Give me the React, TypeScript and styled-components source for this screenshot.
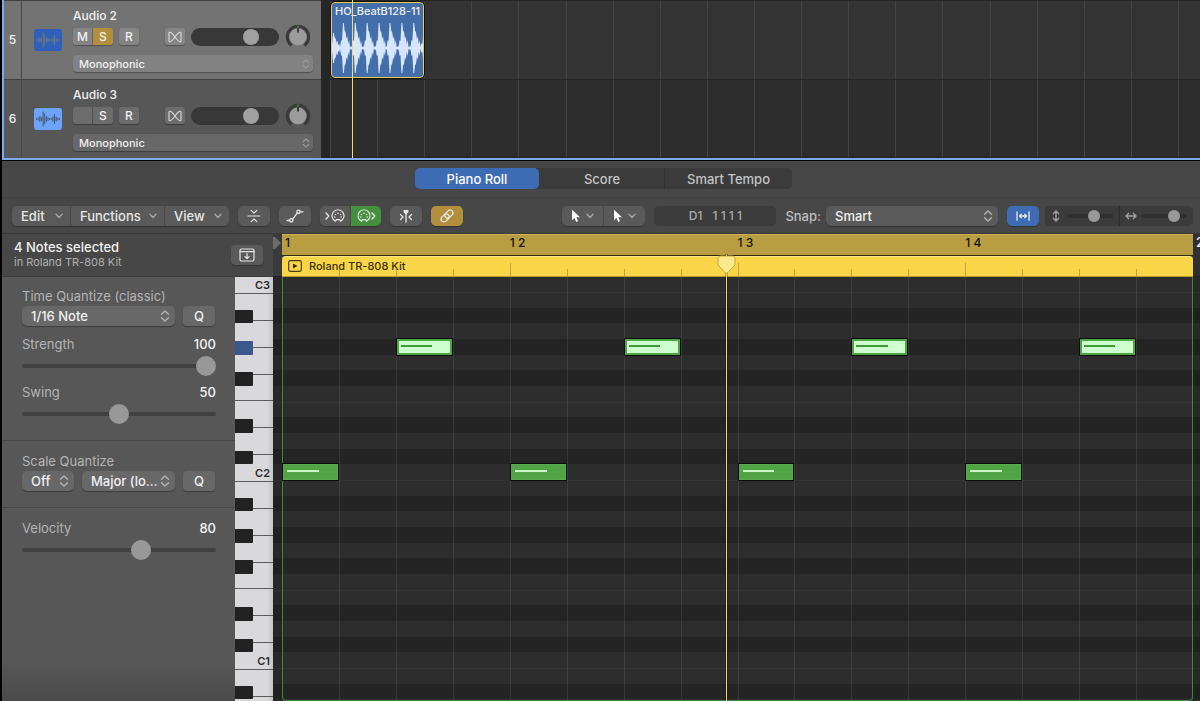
import React from "react";
import styled, { createGlobalStyle, css } from "styled-components";

const Global = createGlobalStyle`
  *, *::before, *::after { box-sizing: border-box; }
  body {
    margin: 0;
    background: #000;
    color: #f0f0f0;
    font: 500 12px/16px Inter, "Liberation Sans", sans-serif;
  }
  button, select, input { font: inherit; color: inherit; margin: 0; border: 0; }
  button { padding: 0; cursor: pointer; }
`;

const Shell = styled.main`
  height: 100vh;
  padding-left: 2px;
  display: flex;
  flex-direction: column;
  overflow: hidden;
`;

/* ---------- arrange area ---------- */

const Arrange = styled.section`
  display: grid;
  grid-template-columns: 319px 1fr;
  border-left: 2px solid #7daaf0;
  border-bottom: 2px solid #7daaf0;
  flex: none;
`;

const TrackList = styled.div`
  border-right: 2px solid #262626;
`;

const Track = styled.div<{ $selected?: boolean }>`
  display: grid;
  grid-template-columns: 18px 51px 1fr;
  border-top: 1px solid #414141;
  background: ${(p) => (p.$selected ? "#737373" : "#575757")};
`;

const TrackNumber = styled.div`
  display: grid;
  place-items: center;
  border-right: 1px solid #484848;
`;

const TrackIcon = styled.div<{ $on?: boolean }>`
  align-self: center;
  justify-self: center;
  width: 28px;
  height: 22px;
  border-radius: 3px;
  background: ${(p) => (p.$on ? "#6ba4fa" : "#2e61b7")};
  color: ${(p) => (p.$on ? "#45536b" : "#6f7783")};
`;

const TrackBody = styled.div`
  padding: 6px 8px 7px 0;
`;

const TrackName = styled.div`
  line-height: 17px;
  padding-bottom: 4px;
`;

const TrackControls = styled.div`
  display: flex;
  align-items: center;
  height: 17px;
  margin-bottom: 10px;
`;

const Toggle = styled.button<{ $gold?: boolean; $join?: "left" | "right" }>`
  width: 20px;
  height: 17px;
  display: grid;
  place-items: center;
  background: ${(p) => (p.$gold ? "#b18f3d" : "rgba(255,255,255,.13)")};
  border-radius: ${(p) =>
    p.$join === "left" ? "3px 0 0 3px" : p.$join === "right" ? "0 3px 3px 0" : "3px"};
  box-shadow: 0 1px 1px rgba(0, 0, 0, .3);
  ${(p) => p.$join === "left" && css`border-right: 1px solid rgba(0, 0, 0, .2);`}
`;

const FlexToggle = styled(Toggle)`
  margin-left: auto;
  margin-right: 6px;
  color: #d4d4d4;
`;

const RecordToggle = styled(Toggle)`
  margin-left: 6px;
`;

const Volume = styled.input`
  appearance: none;
  width: 88px;
  height: 18px;
  padding: 0 1px;
  border-radius: 9px;
  background: #383838;
  &::-webkit-slider-thumb {
    appearance: none;
    width: 16px;
    height: 16px;
    border-radius: 50%;
    background: #a0a0a0;
  }
`;

const KnobBox = styled.span`
  display: block;
  width: 26px;
  height: 26px;
  margin: 0 2px 0 6px;
`;

const SelectBox = styled.span<{ $small?: boolean; $tone?: string; $width?: string }>`
  display: grid;
  grid-template-columns: 1fr auto;
  align-items: center;
  width: ${(p) => p.$width || "auto"};
  height: ${(p) => (p.$small ? 17 : 20)}px;
  font-size: ${(p) => (p.$small ? 11 : 13)}px;
  border-radius: ${(p) => (p.$small ? 4 : 5)}px;
  background: ${(p) => p.$tone || "#686868"};
  box-shadow: 0 1px 1px rgba(0, 0, 0, .3);
  select {
    grid-area: 1 / 1 / 2 / 3;
    appearance: none;
    min-width: 0;
    width: 100%;
    height: 100%;
    padding: 0 14px 0 ${(p) => (p.$small ? 6 : 9)}px;
    background: none;
    outline-offset: 1px;
  }
  select option { background: #444; }
  svg {
    grid-area: 1 / 2;
    margin-right: ${(p) => (p.$small ? 3 : 5)}px;
    pointer-events: none;
    color: ${(p) => (p.$small ? "#9b9b9b" : "#b4b4b4")};
  }
`;

const Lanes = styled.div`
  position: relative;
  display: grid;
  grid-template: 79px 78px / 100%;
  padding-left: 7px;
  background: #262626;
`;

const Lane = styled.div<{ $selected?: boolean }>`
  display: grid;
  grid-template-columns: repeat(18, 1fr) 22px;
  background: ${(p) => (p.$selected ? "#333" : "#2d2d2d")};
  border-top: 1px solid #232323;
`;

const LaneCell = styled.div<{ $col: number }>`
  grid-row: 1;
  grid-column: ${(p) => p.$col};
  border-left: 1px solid #434343;
`;

const Clip = styled.div`
  grid-area: 1 / 1 / 2 / 3;
  z-index: 1;
  margin: 1px 0 1px 1px;
  border: 1px solid #e8cb55;
  border-radius: 4px;
  background: #446ea9;
  outline: 1px solid #111;
  overflow: hidden;
  white-space: nowrap;
  display: flex;
  flex-direction: column;
  font-size: 11px;
  svg { flex: 1; min-height: 0; width: 100%; display: block; }
`;

const ClipName = styled.div`
  padding-left: 3px;
  flex: none;
`;

const ArrangePlayhead = styled.div`
  position: absolute;
  z-index: 2;
  top: 0;
  bottom: 0;
  left: calc(7px + 2.5%);
  width: 1px;
  background: #f3dc78;
`;

/* ---------- editor ---------- */

const Editor = styled.section`
  flex: 1;
  min-height: 0;
  margin-top: 1px;
  display: flex;
  flex-direction: column;
  background: #474747;
  font-size: 13px;
`;

const TabBar = styled.div`
  flex: none;
  display: flex;
  justify-content: center;
  padding: 7px 0 8px 5px;
  border-bottom: 1px solid #414141;
`;

const Tabs = styled.div`
  display: grid;
  grid-template-columns: 124px 126px 127px;
  height: 21px;
  border-radius: 5px;
  background: #3b3b3b;
`;

const Tab = styled.button<{ $active?: boolean; $divided?: boolean }>`
  background: ${(p) => (p.$active ? "#3d6cb5" : "none")};
  color: ${(p) => (p.$active ? "#fff" : "#c3c3c3")};
  font-size: 13px;
  border-radius: 5px;
  ${(p) => p.$divided && css`
    box-shadow: -1px 0 0 #323232;
    border-radius: 0;
  `}
`;

const Toolbar = styled.div`
  flex: none;
  display: flex;
  align-items: center;
  gap: 9px;
  height: 36px;
  padding: 0 7px 0 10px;
  border-bottom: 1px solid #3a3a3a;
`;

const Group = styled.div<{ $push?: boolean }>`
  display: flex;
  gap: 1px;
  height: 20px;
  border-radius: 5px;
  background: #484848;
  overflow: hidden;
  box-shadow: 0 1px 1px rgba(0, 0, 0, .3);
  margin-left: ${(p) => (p.$push ? "auto" : "0")};
`;

const Tool = styled.button<{ $tone?: string; $width?: number }>`
  display: flex;
  align-items: center;
  justify-content: center;
  gap: 5px;
  width: ${(p) => p.$width || 32}px;
  height: 20px;
  background: ${(p) => p.$tone || "#5a5a5a"};
  color: #e6e6e6;
`;

const MenuTool = styled(Tool)`
  justify-content: space-between;
  padding: 0 7px 0 9px;
  svg { color: #a5a5a5; }
`;

const PointerTool = styled(Tool)`
  svg:last-child { color: #a5a5a5; }
`;

const Display = styled.output`
  width: 122px;
  height: 20px;
  border-radius: 5px;
  background: #3b3b3b;
  color: #ababab;
  font-size: 12px;
  display: flex;
  align-items: center;
  justify-content: center;
  gap: 10px;
`;

const SnapLabel = styled.div`
  display: flex;
  align-items: center;
  gap: 5px;
  color: #bdbdbd;
  span { color: #f0f0f0; }
`;

const ZoomGroup = styled.div`
  display: grid;
  grid-template-columns: 74px 74px;
  height: 20px;
  border-radius: 5px;
  background: #3b3b3b;
  margin-left: -3px;
`;

const ZoomCell = styled.label`
  display: flex;
  align-items: center;
  justify-content: space-between;
  padding: 0 6px 0 5px;
  color: #a2a2a2;
  & + & { border-left: 1px solid #2f2f2f; }
`;

const Slider = styled.input<{ $thumb: number }>`
  appearance: none;
  display: block;
  width: 100%;
  height: ${(p) => p.$thumb}px;
  background: none;
  &::-webkit-slider-runnable-track {
    height: 4px;
    border-radius: 2px;
    background: ${(p) => (p.$thumb > 12 ? "#414141" : "#303030")};
  }
  &::-webkit-slider-thumb {
    appearance: none;
    width: ${(p) => p.$thumb}px;
    height: ${(p) => p.$thumb}px;
    margin-top: ${(p) => (4 - p.$thumb) / 2}px;
    border-radius: 50%;
    background: #989898;
  }
`;

const ZoomSlider = styled(Slider)`
  width: 46px;
`;

const Workspace = styled.div`
  flex: 1;
  min-height: 0;
  display: grid;
  grid-template-columns: 271px 9px 1fr 7px;
  grid-template-rows: 43px 1fr;
`;

const Selection = styled.header`
  display: flex;
  align-items: center;
  justify-content: space-between;
  padding: 0 10px 0 12px;
  border-bottom: 1px solid #3b3b3b;
`;

const SelectionText = styled.div`
  line-height: 15px;
  small { display: block; font-size: 11px; font-weight: 400; color: #b0b0b0; }
`;

const CatchButton = styled(Tool)`
  border-radius: 4px;
  box-shadow: 0 1px 1px rgba(0, 0, 0, .3);
`;

const Side = styled.div`
  grid-row: 2;
  grid-column: 1;
  display: grid;
  grid-template-columns: 1fr 38px;
  min-height: 0;
  overflow: hidden;
`;

const Inspector = styled.aside`
  background: linear-gradient(#575757 calc(100% - 40px), #4a4a4a);
  color: #b4b4b4;
`;

const Panel = styled.div`
  padding: 11px 19px 16px 20px;
  & + & { border-top: 1px solid #474747; padding-top: 12px; }
`;

const FieldLine = styled.div`
  display: flex;
  align-items: center;
  gap: 8px;
  color: #f0f0f0;
  margin-top: 2px;
`;

const PanelTitle = styled.div`
  font-weight: 400;
`;

const QButton = styled.button`
  width: 32px;
  height: 20px;
  border-radius: 4px;
  background: #686868;
  box-shadow: 0 1px 1px rgba(0, 0, 0, .3);
`;

const SliderField = styled.label`
  display: grid;
  grid-template-columns: 1fr auto;
  row-gap: 4px;
  font-weight: 400;
  margin-bottom: 8px;
  &:last-child { margin-bottom: 0; }
  b { font-weight: 500; color: #f4f4f4; }
  input { grid-column: 1 / 3; }
`;

const QuantizeSliders = styled.div`
  padding-top: 10px;
`;

const Keyboard = styled.div`
  overflow: hidden;
  background: #1c1c1c;
  color: #2b2b2b;
`;

const KeyOctave = styled.div`
  display: grid;
  height: 188px;
`;

const Whites = styled.div`
  grid-area: 1 / 1;
  display: grid;
  grid-template-rows: repeat(7, 1fr);
`;

const WhiteKey = styled.div`
  background: linear-gradient(90deg, #d9d9db 85%, #c4c4c6);
  border-top: 1px solid #5c5c5c;
  display: flex;
  align-items: flex-end;
  justify-content: flex-end;
  padding-right: 3px;
  font-size: 11px;
  font-weight: 600;
`;

const TopKey = styled(WhiteKey)`
  height: 16px;
  border-top: 0;
`;

const Blacks = styled.div`
  grid-area: 1 / 1;
  display: grid;
  grid-template-rows: repeat(12, 1fr);
  width: 18px;
`;

const BlackKey = styled.div<{ $row: number; $lit?: boolean }>`
  grid-row: ${(p) => p.$row};
  margin: 1px 0;
  border-radius: 0 1px 1px 0;
  background: ${(p) => (p.$lit ? "#3a5889" : "#222")};
`;

const GutterTop = styled.div`
  border-bottom: 1px solid #232323;
  background: #3a3a3a;
  overflow: hidden;
  svg { display: block; margin-top: 3px; }
`;

const Gutter = styled.div<{ $column: number }>`
  grid-row: 2;
  grid-column: ${(p) => p.$column};
  overflow: hidden;
  filter: brightness(.88);
`;

const Timeline = styled.div`
  grid-row: 1 / 3;
  grid-column: 3;
  position: relative;
  display: flex;
  flex-direction: column;
  min-height: 0;
`;

const Ruler = styled.div`
  flex: none;
  height: 22px;
  display: grid;
  grid-template-columns: repeat(4, 1fr);
  background: #b99d43;
  border-top: 1px solid #cdb055;
  border-bottom: 1px solid #33290c;
  color: #151204;
  font-size: 12px;
  line-height: 15px;
`;

const Beat = styled.span<{ $first?: boolean }>`
  padding-left: ${(p) => (p.$first ? 3 : 0)}px;
`;

const RegionBar = styled.div`
  flex: none;
  height: 21px;
  display: grid;
  grid-template-columns: repeat(16, 1fr);
  align-items: end;
  background: #f9d648;
  border-top: 1px solid #fde585;
  border-bottom: 1px solid #b89a2e;
  border-radius: 4px 4px 0 0;
`;

const Tick = styled.i<{ $n: number }>`
  grid-row: 1;
  grid-column: ${(p) => p.$n + 1};
  height: ${(p) => (p.$n % 4 === 0 ? 13 : 7)}px;
  border-left: 1px solid #c2a534;
`;

const RegionTitle = styled.div`
  grid-area: 1 / 1 / 2 / 5;
  align-self: start;
  display: flex;
  align-items: center;
  gap: 7px;
  height: 17px;
  padding-left: 6px;
  font-size: 11px;
  color: #3b310b;
`;

const Canvas = styled.div`
  flex: 1;
  min-height: 0;
  display: grid;
  grid-template-columns: 100%;
  grid-template-rows: 100%;
  overflow: hidden;
`;

const RegionFrame = styled.div`
  grid-area: 1 / 1;
  border: 1px solid #3d8a37;
  border-top: 0;
  border-radius: 0 0 4px 4px;
`;

const Rows = styled.div`
  grid-area: 1 / 1;
  height: 0;
`;

const RowOctave = styled.div`
  display: grid;
  grid-template-rows: repeat(12, 1fr);
  grid-template-columns: repeat(16, 1fr);
  height: 188px;
`;

const Row = styled.div<{ $black?: boolean; $edge?: boolean; $row: number }>`
  grid-column: 1 / 17;
  grid-row: ${(p) => p.$row};
  background: ${(p) => (p.$black ? "#242424" : "#2d2d2d")};
  ${(p) => p.$edge && css`border-top: 1px solid #353535;`}
`;

const TopRow = styled.div`
  height: 15px;
  background: #2d2d2d;
`;

const Columns = styled.div`
  grid-area: 1 / 1;
  display: grid;
  grid-template-columns: repeat(16, 1fr);
  pointer-events: none;
  i { border-left: 1px solid rgba(255, 255, 255, .09); }
  i:first-child { border: 0; }
`;

const Note = styled.div<{ $col: number; $row: number; $selected?: boolean }>`
  grid-column: ${(p) => p.$col};
  grid-row: ${(p) => p.$row};
  z-index: 1;
  margin: 0 1px 0 1px;
  padding: ${(p) => (p.$selected ? "4px 0 0 2px" : "5px 0 0 3px")};
  background: ${(p) => (p.$selected ? "#ceffce" : "#50a446")};
  border: ${(p) => (p.$selected ? 2 : 1)}px solid ${(p) => (p.$selected ? "#4fa546" : "#55aa4b")};
  outline: 1px solid #0c0c0c;
  &::before {
    content: "";
    display: block;
    width: 64%;
    height: 2px;
    background: ${(p) => (p.$selected ? "#439a3a" : "#c9f5c4")};
  }
`;

const Playhead = styled.div`
  position: absolute;
  z-index: 3;
  top: 21px;
  bottom: 0;
  left: 48.7%;
  width: 1px;
  background: #f5dc68;
  outline: 1px solid rgba(0, 0, 0, .25);
  svg { position: absolute; top: 0; left: -9px; }
`;

const EndTop = styled.div`
  grid-row: 1;
  grid-column: 4;
  background: #303030;
  border-bottom: 1px solid #232323;
  overflow: hidden;
  padding-left: 3px;
`;

/* ---------- drawings ---------- */

const stroke = { fill: "none", stroke: "currentColor", strokeLinecap: "round", strokeLinejoin: "round" } as const;

const UpDown = ({ small }: { small?: boolean }) => (
  <svg width={small ? 8 : 10} height={small ? 10 : 12} viewBox="0 0 10 12" {...stroke} strokeWidth="1.4">
    <path d="M1.5 4.2 5 1l3.5 3.2M1.5 7.800 5 11l3.5-3.2" />
  </svg>
);

const Down = () => (
  <svg width="8" height="6" viewBox="0 0 8 6" {...stroke} strokeWidth="1.4">
    <path d="M1 1.3 4 4.500l3-3.2" />
  </svg>
);

const WaveIcon = () => {
  const bars = [1, 2, 5, 3, 14, 10, 5, 3, 1, 1, 5, 9, 4, 2, 1];
  return (
    <svg width="28" height="22" viewBox="0 0 28 22" {...stroke} strokeWidth="1">
      {bars.map((h, i) => (
        <path key={i} d={`M${2.6 + i * 1.63} ${11 - h / 2}v${h}`} />
      ))}
    </svg>
  );
};

const BowTie = () => (
  <svg width="14" height="12" viewBox="0 0 14 12" {...stroke} strokeWidth="1.2">
    <path d="M1 10V2Q1 1 2.200 1.300C6 2.500 8 9.500 11.800 10.700Q13 11 13 10V2Q13 1 11.800 1.300C8 2.500 6 9.500 2.200 10.700Q1 11 1 10z" />
  </svg>
);

const Knob = () => (
  <svg width="26" height="26" viewBox="0 0 26 26">
    <path d="M6.6 21.5A10.7 10.7 0 1 1 19.4 21.5" fill="none" stroke="#3a3a3a" strokeWidth="3" />
    <circle cx="13" cy="13" r="8.5" fill="#9c9c9c" />
    <path d="M13 1.2v3" stroke="#4f9c46" strokeWidth="1.2" />
    <path d="M13 4v4.5" stroke="#161616" strokeWidth="1.4" />
  </svg>
);

const Din = ({ out }: { out?: boolean }) => (
  <svg width="20" height="14" viewBox="0 0 20 14" {...stroke} strokeWidth="1.2">
    <g transform={out ? "translate(-5 0)" : undefined}>
      <path d="M10.5 12.2A6 6 0 1 1 15.5 12.2L14.600 10.6H11.4z" />
      {[[9.8, 8], [10.4, 5.5], [13, 4.3], [15.6, 5.5], [16.2, 8]].map(([x, y]) => (
        <circle key={x} cx={x} cy={y} r=".8" fill="currentColor" stroke="none" />
      ))}
    </g>
    <path d={out ? "M16 4l2.800 3L16 10" : "M1 4l2.800 3L1 10"} strokeWidth="1.4" />
  </svg>
);

const Collapse = () => (
  <svg width="14" height="14" viewBox="0 0 14 14" {...stroke} strokeWidth="1.2">
    <path d="M1 7h12M4.200 1.300 7 4.200l2.800-2.900M4.200 12.700 7 9.800l2.800 2.900" />
  </svg>
);

const Automation = () => (
  <svg width="18" height="14" viewBox="0 0 18 14" {...stroke} strokeWidth="1.3">
    <path d="M1 11.500h2.500M6.700 10.200 11.200 4.200M14.500 2.800H17" />
    <circle cx="5.3" cy="11.3" r="1.7" />
    <circle cx="12.5" cy="2.8" r="1.7" />
  </svg>
);

const MidiIn = () => (
  <svg width="14" height="14" viewBox="0 0 14 14" {...stroke} strokeWidth="1.3">
    <path d="M7 4v9M1.500 5.500 4 8 1.500 10.500M12.500 5.500 10 8 12.500 10.500" />
    <path d="M4.500 1h5v2.300L7 5.600 4.500 3.300z" fill="currentColor" stroke="none" />
  </svg>
);

const LinkIcon = () => (
  <svg width="16" height="16" viewBox="0 0 16 16" {...stroke} strokeWidth="1.3">
    <g transform="rotate(-45 8 8)">
      <rect x=".8" y="5.2" width="9" height="5.6" rx="2.8" />
      <rect x="6.2" y="5.2" width="9" height="5.6" rx="2.8" />
    </g>
  </svg>
);

const Pointer = () => (
  <svg width="10" height="14" viewBox="0 0 10 14">
    <path d="M1 .8v10.400l2.500-2.300 1.700 4 1.800-.8-1.700-3.900H9z" fill="#fff" />
  </svg>
);

const FitWidth = () => (
  <svg width="14" height="10" viewBox="0 0 14 10" {...stroke} strokeWidth="1.3">
    <path d="M1 .8v8.400M13 .8v8.400M3.500 5h7M5.300 3.200 3.500 5l1.800 1.800M8.700 3.200 10.500 5 8.700 6.800" />
  </svg>
);

const Stretch = ({ vertical }: { vertical?: boolean }) => (
  <svg width="12" height="12" viewBox="0 0 12 12" {...stroke} strokeWidth="1.3">
    <g transform={vertical ? "rotate(90 6 6)" : undefined}>
      <path d="M1.200 6h9.600M3.700 3.300 1 6l2.700 2.700M8.300 3.300 11 6 8.300 8.700" />
    </g>
  </svg>
);

const CatchIcon = () => (
  <svg width="16" height="14" viewBox="0 0 16 14" {...stroke} strokeWidth="1.2">
    <rect x="1" y="1" width="14" height="12" rx="1.5" />
    <path d="M1 3.600h14M8 5.500v5M5.900 8.600 8 10.700l2.100-2.100" />
  </svg>
);

const PlayBox = () => (
  <svg width="14" height="12" viewBox="0 0 14 12">
    <rect x=".7" y=".7" width="12.6" height="10.6" rx="1.5" fill="none" stroke="#4b3f10" strokeWidth="1.2" />
    <path d="M5 3.400v5.200L9.500 6z" fill="#2f2708" />
  </svg>
);

/* A drum hit with a short lead-in and a ragged tail, repeated along the clip
   and mirrored around the centre line. */
const ClipWave = () => {
  const hits = [1, 11, 23, 35, 47, 58, 70, 82, 92];
  const shape = [2, 8, 7, 25, 25, 17, 16, 9, 12, 4, 8, 1];
  const top: string[] = [];
  const bottom: string[] = [];
  hits.forEach((x, i) =>
    shape.forEach((h, j) => {
      const px = x + (j - 3) * 0.9;
      const edge = i === 0 || i === hits.length - 1;
      const a = edge ? h * 0.6 : h;
      top.push(`${px.toFixed(1)} ${(29 - a).toFixed(1)}`);
      bottom.unshift(`${px.toFixed(1)} ${(29 + a).toFixed(1)}`);
    })
  );
  return (
    <svg viewBox="0 0 92 58" preserveAspectRatio="none">
      <polygon points={[...top, ...bottom].join(" ")} fill="#d6e7fd" />
    </svg>
  );
};

/* ---------- pieces ---------- */

const Choice = ({ label, value, small, tone, width }: {
  label: string; value: string; small?: boolean; tone?: string; width?: string;
}) => (
  <SelectBox $small={small} $tone={tone} $width={width}>
    <select aria-label={label} defaultValue={value}>
      <option>{value}</option>
    </select>
    <UpDown small={small} />
  </SelectBox>
);

const TrackHeader = ({ n, name, selected }: { n: number; name: string; selected?: boolean }) => (
  <Track $selected={selected}>
    <TrackNumber>{n}</TrackNumber>
    <TrackIcon $on={!selected}><WaveIcon /></TrackIcon>
    <TrackBody>
      <TrackName>{name}</TrackName>
      <TrackControls>
        <Toggle $join="left" aria-label="Mute">{selected ? "M" : ""}</Toggle>
        <Toggle $join="right" $gold={selected} aria-label="Solo">S</Toggle>
        <RecordToggle aria-label="Record">R</RecordToggle>
        <FlexToggle aria-label="Flex"><BowTie /></FlexToggle>
        <Volume type="range" aria-label={`${name} volume`} defaultValue={73} />
        <KnobBox><Knob /></KnobBox>
      </TrackControls>
      <Choice small label={`${name} flex mode`} value="Monophonic" tone={selected ? "#828282" : "#686868"} />
    </TrackBody>
  </Track>
);

const BLACK_ROWS = [2, 4, 6, 9, 11];
const ROWS = Array.from({ length: 12 }, (_, i) => i + 1);
const CELLS = Array.from({ length: 16 }, (_, i) => i);
const LANE_CELLS = Array.from({ length: 19 }, (_, i) => i + 1);

type NoteData = { col: number; row: number; selected?: boolean };

const NOTES: NoteData[] = [
  { col: 1, row: 12 }, { col: 5, row: 12 }, { col: 9, row: 12 }, { col: 13, row: 12 },
  { col: 3, row: 4, selected: true }, { col: 7, row: 4, selected: true },
  { col: 11, row: 4, selected: true }, { col: 15, row: 4, selected: true },
];

const Pitches = ({ notes = [] }: { notes?: NoteData[] }) => (
  <Rows>
    <TopRow />
    {[0, 1, 2].map((o) => (
      <RowOctave key={o}>
        {ROWS.map((r) => (
          <Row key={r} $row={r} $black={BLACK_ROWS.includes(r)} $edge={r === 1 || r === 8} />
        ))}
        {o === 0 && notes.map((n) => (
          <Note key={`${n.col}-${n.row}`} $col={n.col} $row={n.row} $selected={n.selected} />
        ))}
      </RowOctave>
    ))}
  </Rows>
);

const Keys = () => (
  <Keyboard>
    <TopKey>C3</TopKey>
    {[2, 1, 0].map((o) => (
      <KeyOctave key={o}>
        <Whites>
          {["B", "A", "G", "F", "E", "D", "C"].map((k) => (
            <WhiteKey key={k}>{k === "C" && o > 0 ? `C${o}` : null}</WhiteKey>
          ))}
        </Whites>
        <Blacks>
          {BLACK_ROWS.map((r) => <BlackKey key={r} $row={r} $lit={o === 2 && r === 4} />)}
        </Blacks>
      </KeyOctave>
    ))}
  </Keyboard>
);

export default function App() {
  return (
    <Shell>
      <Global />
      <Arrange>
        <TrackList>
          <TrackHeader n={5} name="Audio 2" selected />
          <TrackHeader n={6} name="Audio 3" />
        </TrackList>
        <Lanes>
          <Lane $selected>
            {LANE_CELLS.map((c) => <LaneCell key={c} $col={c} />)}
            <Clip>
              <ClipName>HO_BeatB128-11</ClipName>
              <ClipWave />
            </Clip>
          </Lane>
          <Lane>
            {LANE_CELLS.map((c) => <LaneCell key={c} $col={c} />)}
          </Lane>
          <ArrangePlayhead />
        </Lanes>
      </Arrange>

      <Editor>
        <TabBar>
          <Tabs role="tablist">
            <Tab role="tab" aria-selected $active>Piano Roll</Tab>
            <Tab role="tab">Score</Tab>
            <Tab role="tab" $divided>Smart Tempo</Tab>
          </Tabs>
        </TabBar>

        <Toolbar>
          <Group>
            <MenuTool $width={58}>Edit <Down /></MenuTool>
            <MenuTool $width={93}>Functions <Down /></MenuTool>
            <MenuTool $width={64}>View <Down /></MenuTool>
          </Group>
          <Group><Tool aria-label="Collapse"><Collapse /></Tool></Group>
          <Group><Tool aria-label="Automation"><Automation /></Tool></Group>
          <Group>
            <Tool $width={30} aria-label="MIDI in"><Din /></Tool>
            <Tool $width={30} $tone="#45903f" aria-label="MIDI out"><Din out /></Tool>
          </Group>
          <Group><Tool aria-label="Catch"><MidiIn /></Tool></Group>
          <Group><Tool $tone="#b18f3d" aria-label="Link"><LinkIcon /></Tool></Group>
          <Group $push>
            <PointerTool $width={41} aria-label="Left-click tool"><Pointer /><Down /></PointerTool>
            <PointerTool $width={41} aria-label="Command-click tool"><Pointer /><Down /></PointerTool>
          </Group>
          <Display><span>D1</span><span>1 1 1 1</span></Display>
          <SnapLabel>Snap: <Choice label="Snap" value="Smart" tone="#5a5a5a" width="172px" /></SnapLabel>
          <Group><Tool $tone="#3d6cb5" aria-label="Fit width"><FitWidth /></Tool></Group>
          <ZoomGroup>
            <ZoomCell>
              <Stretch vertical />
              <ZoomSlider $thumb={12} type="range" aria-label="Vertical zoom" defaultValue={62} />
            </ZoomCell>
            <ZoomCell>
              <Stretch />
              <ZoomSlider $thumb={12} type="range" aria-label="Horizontal zoom" defaultValue={80} />
            </ZoomCell>
          </ZoomGroup>
        </Toolbar>

        <Workspace>
          <Selection>
            <SelectionText>
              4 Notes selected
              <small>in Roland TR-808 Kit</small>
            </SelectionText>
            <CatchButton aria-label="Show inspector"><CatchIcon /></CatchButton>
          </Selection>
          <GutterTop>
            <svg width="8" height="12" viewBox="0 0 8 12"><path d="M0 0h2l6 6-6 6H0z" fill="#6b6b6b" /></svg>
          </GutterTop>

          <Side>
            <Inspector>
              <Panel>
                <PanelTitle>Time Quantize (classic)</PanelTitle>
                <FieldLine>
                  <Choice label="Time quantize" value="1/16 Note" width="153px" />
                  <QButton>Q</QButton>
                </FieldLine>
                <QuantizeSliders>
                  <SliderField>
                    Strength <b>100</b>
                    <Slider $thumb={20} type="range" defaultValue={100} />
                  </SliderField>
                  <SliderField>
                    Swing <b>50</b>
                    <Slider $thumb={20} type="range" defaultValue={50} />
                  </SliderField>
                </QuantizeSliders>
              </Panel>
              <Panel>
                <PanelTitle>Scale Quantize</PanelTitle>
                <FieldLine>
                  <Choice label="Scale quantize root" value="Off" width="52px" />
                  <Choice label="Scale" value="Major (lo…" width="93px" />
                  <QButton>Q</QButton>
                </FieldLine>
              </Panel>
              <Panel>
                <SliderField>
                  Velocity <b>80</b>
                  <Slider $thumb={20} type="range" min={1} max={127} defaultValue={80} />
                </SliderField>
              </Panel>
            </Inspector>
            <Keys />
          </Side>

          <Gutter $column={2}><Pitches /></Gutter>
          <Timeline>
            <Ruler>
              <Beat $first>1</Beat><Beat>1 2</Beat><Beat>1 3</Beat><Beat>1 4</Beat>
            </Ruler>
            <RegionBar>
              {CELLS.slice(1).map((n) => <Tick key={n} $n={n} />)}
              <RegionTitle><PlayBox />Roland TR-808 Kit</RegionTitle>
            </RegionBar>
            <Canvas>
              <Pitches notes={NOTES} />
              <Columns>{CELLS.map((n) => <i key={n} />)}</Columns>
              <RegionFrame />
            </Canvas>
            <Playhead>
              <svg width="19" height="20" viewBox="0 0 19 20">
                <path d="M3.500 1h12q2.500 0 2.500 2.500V9q0 1-1 2l-6 6.500q-1.500 1.200-3 0L2 11q-1-1-1-2V3.500Q1 1 3.500 1z" fill="#fbe98f" stroke="#c5a93d" />
              </svg>
            </Playhead>
          </Timeline>
          <EndTop>2</EndTop>
          <Gutter $column={4}><Pitches /></Gutter>
        </Workspace>
      </Editor>
    </Shell>
  );
}
